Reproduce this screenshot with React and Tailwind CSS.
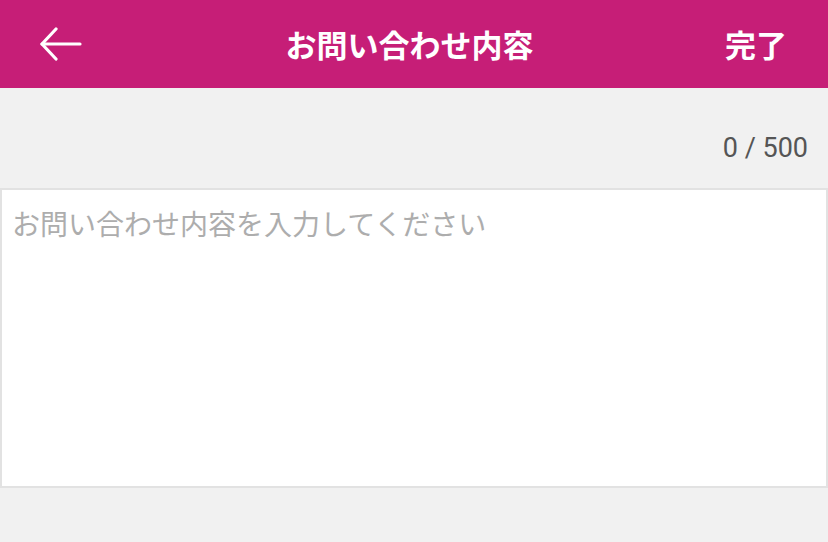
import React from "react";

const App = () => {
    return (
        <div className="w-[828px] h-[542px] bg-[#f1f1f1] overflow-hidden" style={{ fontFamily: '"Noto Sans CJK JP", "Noto Sans", sans-serif' }}>
            <header className="h-[88px] bg-[#c61e77] flex items-center justify-between pl-[40px] pr-[41px] text-white">
                <svg width="42" height="34" viewBox="0 0 42 34" fill="none" stroke="white" strokeWidth="3.2" strokeLinecap="round" strokeLinejoin="round">
                    <path d="M2 17 H40" />
                    <path d="M16 2 L2 17 L16 32" />
                </svg>
                <h1 className="text-[31px] font-bold ml-[12px]">お問い合わせ内容</h1>
                <button className="text-[31px] font-bold">完了</button>
            </header>
            <div className="h-[100px] flex items-center justify-end pr-[20px] pt-[20px] text-[27px] text-[#555555]" style={{ fontFamily: '"Roboto", sans-serif' }}>
                0 / 500
            </div>
            <div className="h-[300px] bg-white border-2 border-[#e2e2e2]">
                <textarea
                    className="w-full h-full resize-none outline-none px-[10px] py-[17px] text-[28px] leading-[1.2] placeholder:text-[#adadad] bg-transparent"
                    placeholder="お問い合わせ内容を入力してください"
                />
            </div>
        </div>
    );
};

export default App;
